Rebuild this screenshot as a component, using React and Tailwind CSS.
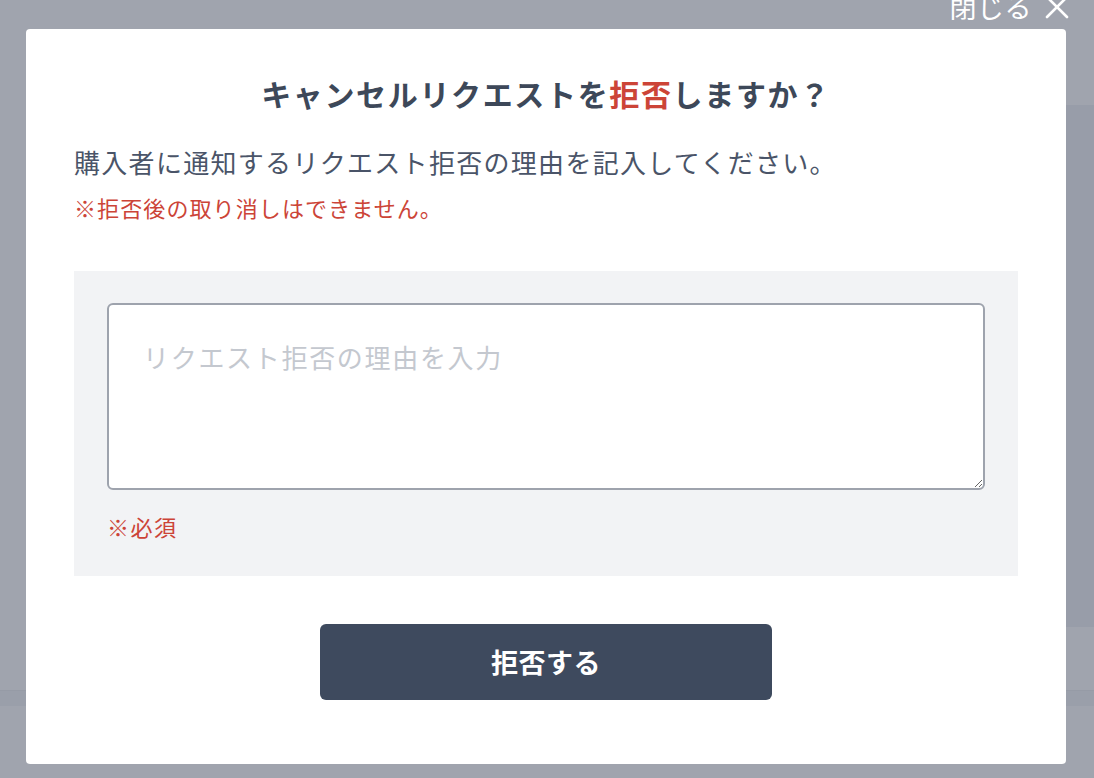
import React from 'react'

const jp = { fontFamily: '"Noto Sans CJK JP", "Noto Sans", sans-serif' }

function Backdrop() {
    // dimmed page behind the modal
    return (
        <div className="flex flex-col h-[778px] w-full bg-[#a0a4ae]">
            <div className="h-[105px] bg-[#a0a4ae]" />
            <div className="flex h-[522px]">
                <div className="flex-1 bg-[#a0a4ae]" />
                <div className="w-[960px] bg-[#989da9]" />
            </div>
            <div className="h-[63px] bg-[#a0a4ae]" />
            <div className="h-[16px] bg-[#9a9faa] border-t border-[#969ba6]" />
            <div className="flex-1 bg-[#a0a4ae]" />
        </div>
    )
}

function CloseButton() {
    return (
        <button type="button" className="absolute right-[24px] top-[-12px] flex items-center gap-[12px] text-white text-[27px] leading-[38px] tracking-[0.02em]" style={jp}>
            閉じる
            <svg width="26" height="26" viewBox="0 0 26 26" fill="none" stroke="white" strokeWidth="2.6" strokeLinecap="round">
                <path d="M3 3 L23 23" />
                <path d="M23 3 L3 23" />
            </svg>
        </button>
    )
}

export default function App() {
    return (
        <div className="relative w-full h-[778px] overflow-hidden" style={jp}>
            <Backdrop />
            <CloseButton />
            {/* Reject modal */}
            <div className="absolute left-[26px] top-[29px] w-[1040px] bg-white rounded-[4px] px-[48px] pt-[43px] pb-[64px] flex flex-col">
                <h2 className="text-center text-[30px] leading-[42px] font-bold tracking-[0.055em] text-[#3d4859]">
                    キャンセルリクエストを<span className="text-[#cc4437]">拒否</span>しますか？
                </h2>
                <p className="mt-[29px] text-[26px] leading-[38px] tracking-[0.05em] text-[#4a5468]">
                    購入者に通知するリクエスト拒否の理由を記入してください。
                </p>
                <p className="mt-[10px] text-[22px] leading-[32px] tracking-[0.05em] text-[#cc4437]">
                    ※拒否後の取り消しはできません。
                </p>
                <div className="mt-[48px] bg-[#f2f3f5] px-[33px] pt-[32px] pb-[34px]">
                    <textarea
                        className="block w-full h-[187px] bg-white border-2 border-[#9ea3ad] rounded-[6px] px-[34px] py-[33px] text-[26px] leading-[38px] tracking-[0.065em] text-[#4a5468] placeholder:text-[#c4c8cf] outline-none"
                        style={jp}
                        placeholder="リクエスト拒否の理由を入力"
                    />
                    <p className="mt-[20px] text-[22px] leading-[32px] tracking-[0.07em] text-[#cc4437]">※必須</p>
                </div>
                <div className="mt-[48px] flex justify-center">
                    <button type="button" className="w-[452px] h-[76px] rounded-[6px] bg-[#3e4a5e] text-white text-[27px] font-bold tracking-[0.02em]" style={jp}>
                        拒否する
                    </button>
                </div>
            </div>
        </div>
    )
}
